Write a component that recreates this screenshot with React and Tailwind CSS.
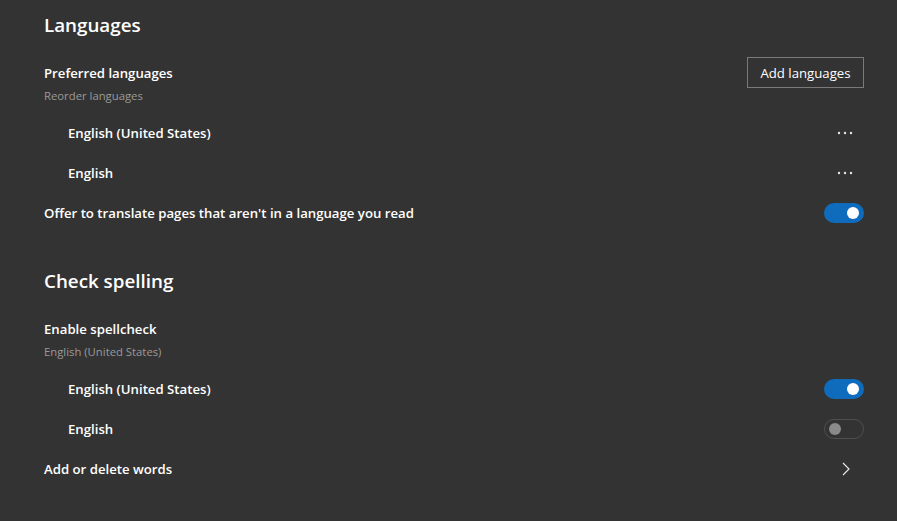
import React, { useState } from "react";

function Toggle({ on, onChange }) {
  return (
    <button
      onClick={onChange}
      className={
        on
          ? "w-[40px] h-[20px] rounded-full bg-[#0f6cbd] flex items-center justify-end pr-[5px]"
          : "w-[40px] h-[20px] rounded-full border border-[#4f4f4f] flex items-center justify-start pl-[4px]"
      }
    >
      <span className={on ? "w-[12px] h-[12px] rounded-full bg-white" : "w-[12px] h-[12px] rounded-full bg-[#8a8a8a]"} />
    </button>
  );
}

function Dots() {
  return (
    <svg width="16" height="4" viewBox="0 0 16 4" className="mr-[11px]">
      <circle cx="2" cy="2" r="1.2" fill="#e6e6e6" />
      <circle cx="8" cy="2" r="1.2" fill="#e6e6e6" />
      <circle cx="14" cy="2" r="1.2" fill="#e6e6e6" />
    </svg>
  );
}

function Row({ label, indent, children }) {
  return (
    <div className={"h-[40px] flex items-center justify-between " + (indent ? "pl-[24px]" : "")}>
      <span className="pt-[2px] text-[13.2px] font-semibold text-white">{label}</span>
      {children}
    </div>
  );
}

export default function App() {
  const [translate, setTranslate] = useState(true);
  const [spellUs, setSpellUs] = useState(true);
  const [spellEn, setSpellEn] = useState(false);

  return (
    <div
      className="min-h-screen bg-[#333333] pl-[44px] pr-[33px] pt-[10px]"
      style={{ fontFamily: '"Open Sans", "Noto Sans", sans-serif' }}
    >
      <h1 className="text-[18.8px] leading-[28px] pt-[1px] font-semibold text-white">Languages</h1>

      <div className="mt-[14px] h-[60px] flex justify-between">
        <div className="pt-[10px]">
          <div className="text-[13.2px] leading-[20px] font-semibold text-white">Preferred languages</div>
          <div className="mt-[3px] text-[11.3px] leading-[20px] text-[#9a9a9a]">Reorder languages</div>
        </div>
        <button className="mt-[4px] h-[31px] w-[117px] pt-[2px] border border-[#7a7a7a] text-[13.2px] text-white">
          Add languages
        </button>
      </div>

      <Row label="English (United States)" indent>
        <Dots />
      </Row>
      <Row label="English" indent>
        <Dots />
      </Row>
      <Row label="Offer to translate pages that aren't in a language you read">
        <Toggle on={translate} onChange={() => setTranslate(!translate)} />
      </Row>

      <h1 className="mt-[33px] pt-[1px] text-[18.8px] leading-[28px] font-semibold text-white">Check spelling</h1>

      <div className="mt-[14px] h-[60px] pt-[10px]">
        <div className="text-[13.2px] leading-[20px] font-semibold text-white">Enable spellcheck</div>
        <div className="mt-[3px] text-[11.3px] leading-[20px] text-[#9a9a9a]">English (United States)</div>
      </div>

      <Row label="English (United States)" indent>
        <Toggle on={spellUs} onChange={() => setSpellUs(!spellUs)} />
      </Row>
      <Row label="English" indent>
        <Toggle on={spellEn} onChange={() => setSpellEn(!spellEn)} />
      </Row>
      <Row label="Add or delete words">
        <svg width="8" height="14" viewBox="0 0 8 14" className="mr-[14px]">
          <path d="M1 1 L7 7 L1 13" fill="none" stroke="#e6e6e6" strokeWidth="1.2" />
        </svg>
      </Row>
    </div>
  );
}
